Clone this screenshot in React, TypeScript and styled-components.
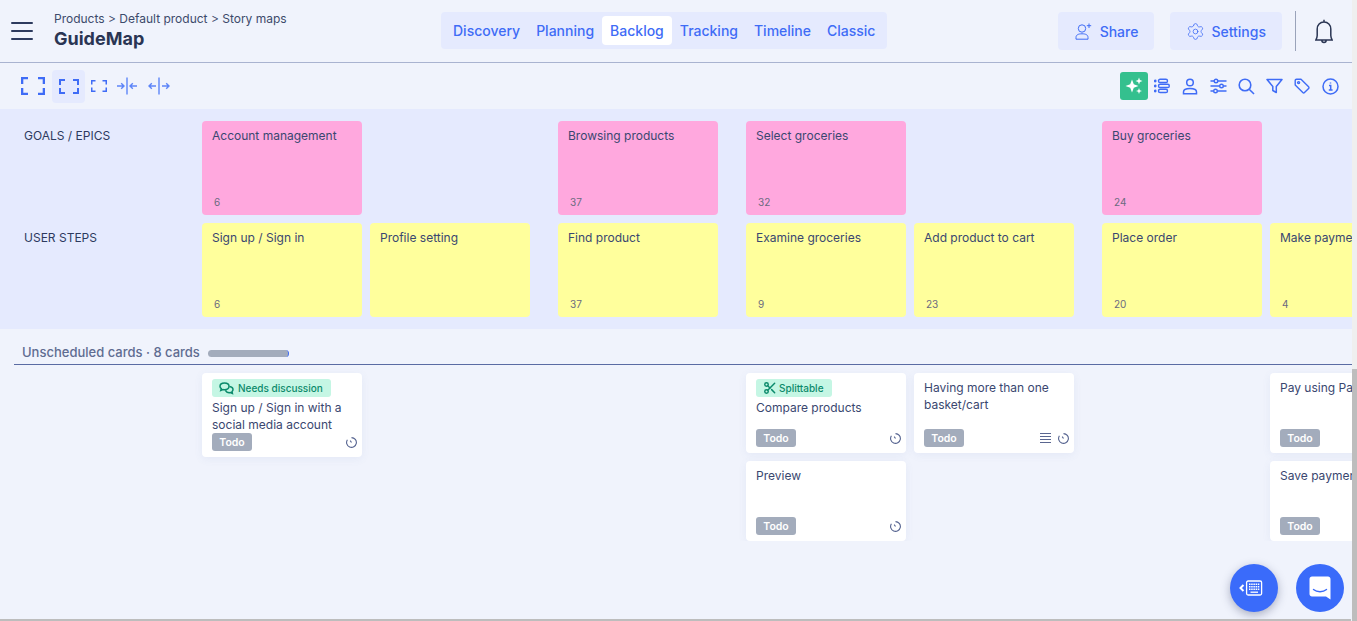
import React from 'react'
import styled, { createGlobalStyle } from 'styled-components'
import { Scissors, Settings } from 'lucide-react'

// ================================================================================================

const GlobalStyle = createGlobalStyle`
  html, body {
    margin: 0;
    padding: 0;
    height: 621px;
    overflow: hidden;
    background: #f0f3fc;
    font-family: Inter, "Liberation Sans", sans-serif;
  }
`

const BLUE = '#3f6cf6'
const INK = '#3a4770'

// ================================================================================================

const Page = styled.div`
  position: relative;
  width: 1357px;
  height: 621px;
  overflow: hidden;
  background: #f0f3fc;
`

const Header = styled.header`
  display: flex;
  align-items: center;
  height: 63px;
  padding: 0 24px 0 11px;
  box-sizing: border-box;
  border-bottom: 1px solid #a9b3d0;
`

const Brand = styled.div`
  display: flex;
  align-items: center;
  gap: 21px;
  width: 430px;
`

const BrandText = styled.div`
  padding-bottom: 2px;
`

const Burger = styled.button`
  display: flex;
  flex-direction: column;
  gap: 6px;
  width: 22px;
  padding: 0;
  border: none;
  background: transparent;

  span {
    height: 2px;
    border-radius: 1px;
    background: #2d3a5e;
  }
`

const Crumbs = styled.div`
  font-size: 12px;
  line-height: 16px;
  color: #3d4a6b;
`

const Title = styled.div`
  font-size: 18px;
  line-height: 23px;
  font-weight: 700;
  color: #2a3553;
`

const Tabs = styled.nav`
  display: flex;
  align-items: center;
  height: 37px;
  margin-top: -1px;
  padding: 0 4px;
  border-radius: 4px;
  background: #e5eafe;
`

const Tab = styled.a<{ $active?: boolean }>`
  padding: 0 8px;
  height: 29px;
  line-height: 29px;
  border-radius: 4px;
  font-size: 14px;
  font-weight: 500;
  color: ${BLUE};
  background: ${props => (props.$active ? '#fff' : 'transparent')};
`

const HeaderActions = styled.div`
  display: flex;
  align-items: center;
  margin-left: auto;
`

const ActionBtn = styled.button`
  display: flex;
  align-items: center;
  gap: 8px;
  height: 38px;
  padding: 0 16px 0 17px;
  margin-left: 16px;
  border: none;
  border-radius: 4px;
  font-family: inherit;
  font-size: 14px;
  font-weight: 500;
  color: ${BLUE};
  background: #e5eafe;
`

const Gear = styled(Settings)`
  margin: 0 -1.5px;
`

const Divider = styled.div`
  width: 1px;
  height: 40px;
  margin: 0 19px 0 13px;
  background: #9aa3ba;
`

const Toolbar = styled.div`
  display: flex;
  align-items: center;
  height: 46px;
  padding: 0 13px 0 15px;
  box-sizing: border-box;
`

const ToolBtn = styled.button<{ $active?: boolean; $size?: number; $gap?: number }>`
  display: flex;
  align-items: center;
  justify-content: center;
  width: ${props => props.$size || 28}px;
  height: 33px;
  margin-left: ${props => props.$gap || 0}px;
  padding: 0;
  border: none;
  border-radius: 4px;
  background: ${props => (props.$active ? '#e5eafe' : 'transparent')};
  color: ${BLUE};
`

const ToolRight = styled.div`
  display: flex;
  align-items: center;
  margin-left: auto;
`

const AiBtn = styled.button`
  display: flex;
  align-items: center;
  justify-content: center;
  width: 28px;
  height: 28px;
  padding: 0;
  border: none;
  border-radius: 3px;
  background: #34c08e;
`

const Band = styled.section`
  display: flex;
  flex-direction: column;
  gap: 8px;
  width: 1352px;
  height: 220px;
  padding: 12px 0;
  box-sizing: border-box;
  overflow: hidden;
  background: #e5eafe;
`

const Lane = styled.div`
  display: flex;
  height: 94px;
`

const LaneLabel = styled.div`
  flex: 0 0 202px;
  padding: 7px 0 0 24px;
  box-sizing: border-box;
  font-size: 12px;
  line-height: 16px;
  color: #2d3a5e;
`

const Columns = styled.div`
  display: flex;
  flex: none;
  gap: 28px;
`

const Group = styled.div`
  display: flex;
  flex: none;
  gap: 8px;
`

const Slot = styled.div`
  flex: none;
  width: 160px;
`

const Sticky = styled.div<{ $color: string }>`
  position: relative;
  flex: none;
  width: 160px;
  height: 94px;
  padding: 7px 10px;
  box-sizing: border-box;
  border-radius: 4px;
  font-size: 12px;
  line-height: 16px;
  white-space: nowrap;
  color: ${INK};
  background: ${props => props.$color};
`

const Count = styled.span`
  position: absolute;
  left: 12px;
  bottom: 6px;
  font-size: 10px;
  line-height: 14px;
  color: #6b6b80;
`

const Section = styled.div`
  display: flex;
  align-items: center;
  width: 1338px;
  height: 36px;
  margin-left: 14px;
  padding: 11px 0 0 8px;
  box-sizing: border-box;
  border-bottom: 1px solid #5a6ba3;
  font-size: 13px;
  font-weight: 500;
  color: #5f6c91;
`

const Progress = styled.div`
  width: 81px;
  height: 7px;
  margin-left: 8px;
  margin-top: 3px;
  border-radius: 4px;
  border-right: 1px solid ${BLUE};
  box-sizing: border-box;
  background: #a3acbc;
`

const Backlog = styled.div`
  display: flex;
  gap: 28px;
  width: 1352px;
  padding: 8px 0 0 202px;
  box-sizing: border-box;
  overflow: hidden;
`

const Stack = styled.div`
  display: flex;
  flex: none;
  flex-direction: column;
  gap: 8px;
  width: 160px;
`

const Card = styled.article<{ $tall?: boolean }>`
  display: flex;
  flex-direction: column;
  width: 160px;
  min-height: ${props => (props.$tall ? 84 : 80)}px;
  padding: 6px 5px 6px 10px;
  box-sizing: border-box;
  border-radius: 4px;
  background: #fff;
  box-shadow: 0 2px 8px rgba(90, 110, 180, 0.08);
`

const CardText = styled.div`
  font-size: 12px;
  line-height: 17px;
  white-space: pre;
  color: ${INK};
`

const Tag = styled.span`
  display: inline-flex;
  align-self: flex-start;
  align-items: center;
  gap: 4px;
  height: 18px;
  margin-bottom: 2px;
  padding: 0 8px 0 7px;
  border-radius: 3px;
  font-size: 10px;
  font-weight: 500;
  color: #0b8a6b;
  background: #c5f6e4;
`

const TagScissors = styled(Scissors)`
  margin-right: -2px;
`

const CardFooter = styled.div`
  display: flex;
  align-items: center;
  gap: 7px;
  margin-top: auto;
`

const Status = styled.span`
  width: 40px;
  height: 18px;
  margin-right: auto;
  border-radius: 3px;
  font-size: 10.5px;
  font-weight: 600;
  line-height: 19px;
  text-align: center;
  color: #fff;
  background: #a3acbc;
`

const Fab = styled.button<{ $right: number; $shadow?: boolean }>`
  position: absolute;
  right: ${props => props.$right}px;
  bottom: 9px;
  display: flex;
  align-items: center;
  justify-content: center;
  width: 48px;
  height: 48px;
  padding: 0;
  border: none;
  border-radius: 50%;
  background: #3a6bfa;
  box-shadow: ${props => (props.$shadow ? '0 3px 10px rgba(40, 50, 90, 0.35)' : 'none')};
`

const VTrack = styled.div`
  position: absolute;
  top: 0;
  right: 0;
  bottom: 0;
  width: 5px;
  background: #efefef;
`

const VThumb = styled.div`
  position: absolute;
  top: 369px;
  right: 0;
  bottom: 0;
  width: 5px;
  background: #bdbdbd;
`

const HThumb = styled.div`
  position: absolute;
  left: 0;
  bottom: 0;
  width: 1351px;
  height: 2px;
  background: #bdbdbd;
`

// ================================================================================================

const Frame = ({ w, h, t, len }: { w: number; h: number; t: number; len: number }) => {
  const a = t / 2
  return (
    <svg width={w} height={h} viewBox={`0 0 ${w} ${h}`} fill="none" stroke="currentColor" strokeWidth={t}>
      <path
        d={`M${a} ${len}V${a}H${len}M${w - len} ${a}H${w - a}V${len}M${w - a} ${h - len}V${h - a}H${w - len}M${len} ${h - a}H${a}V${h - len}`}
      />
    </svg>
  )
}

const Collapse = () => (
  <svg width="22" height="18" viewBox="0 0 22 18" fill="none" stroke="#5d85f8" strokeWidth="1.4">
    <path d="M11 .5V17.5M1 9H8M5.2 6.2L8 9L5.2 11.8M21 9H14M16.8 6.2L14 9L16.8 11.8" />
  </svg>
)

const Expand = () => (
  <svg width="22" height="18" viewBox="0 0 22 18" fill="none" stroke="#5d85f8" strokeWidth="1.4">
    <path d="M11 .5V17.5M8 9H1M3.8 6.2L1 9L3.8 11.8M14 9H21M18.2 6.2L21 9L18.2 11.8" />
  </svg>
)

const ShareIcon = () => (
  <svg width="17" height="17" viewBox="0 0 17 17" fill="none" stroke="currentColor" strokeWidth="1">
    <circle cx="7" cy="5.5" r="3.7" />
    <path d="M1 16.2V14.5C1 12 3 10.8 7 10.8C11 10.8 13 12 13 14.5V16.2ZM14 .5V5M11.8 2.7H16.2" />
  </svg>
)

const Bell = () => (
  <svg width="18" height="25" viewBox="0 0 18 25" fill="none" stroke="#2a3553" strokeWidth="1.5">
    <path d="M9 .8V3M9 3C5 3 2.2 6 2.2 10V16.5C2.2 18.3 1.6 19.5.8 21H17.2C16.4 19.5 15.8 18.3 15.8 16.5V10C15.8 6 13 3 9 3ZM6.8 21C6.8 24.4 11.2 24.4 11.2 21" />
  </svg>
)

const Sparkles = () => (
  <svg width="20" height="20" viewBox="0 0 20 20" fill="#fff">
    <path d="M8 3.5L9.8 8.2L14.5 10L9.8 11.8L8 16.5L6.2 11.8L1.5 10L6.2 8.2Z" />
    <path d="M15 1.5L15.9 4.1L18.5 5L15.9 5.9L15 8.5L14.1 5.9L11.5 5L14.1 4.1Z" />
    <path d="M15 12L15.8 14.2L18 15L15.8 15.8L15 18L14.2 15.8L12 15L14.2 14.2Z" />
  </svg>
)

const BarList = () => (
  <svg width="16" height="16" viewBox="0 0 16 16" fill="none" stroke="currentColor" strokeWidth="1.4">
    <circle cx="1.2" cy="3" r=".7" />
    <circle cx="1.2" cy="8" r=".7" />
    <circle cx="1.2" cy="13" r=".7" />
    <rect x="4.5" y="1.3" width="9" height="3.2" rx="1.6" />
    <rect x="4.5" y="6.3" width="10.8" height="3.2" rx="1.6" />
    <rect x="4.5" y="11.3" width="9" height="3.2" rx="1.6" />
  </svg>
)

const Person = () => (
  <svg width="16" height="17" viewBox="0 0 16 17" fill="none" stroke="currentColor" strokeWidth="1.5">
    <circle cx="8" cy="4.5" r="3.3" />
    <path d="M1.5 15.7V14C1.5 11.8 3.5 10.6 8 10.6C12.5 10.6 14.5 11.8 14.5 14V15.7Z" />
  </svg>
)

const Sliders = () => (
  <svg width="17" height="16" viewBox="0 0 17 16" fill="none" stroke="currentColor" strokeWidth="1.4">
    <path d="M.5 3H4M8 3H16.5M.5 8H9.5M13.5 8H16.5M.5 13H3.5M7.5 13H16.5" />
    <circle cx="6" cy="3" r="1.8" />
    <circle cx="11.5" cy="8" r="1.8" />
    <circle cx="5.5" cy="13" r="1.8" />
  </svg>
)

const Search = () => (
  <svg width="17" height="17" viewBox="0 0 17 17" fill="none" stroke="currentColor" strokeWidth="1.6">
    <circle cx="7" cy="7" r="5.8" />
    <path d="M11.2 11.2L16 16" />
  </svg>
)

const Funnel = () => (
  <svg width="17" height="16" viewBox="0 0 17 16" fill="none" stroke="currentColor" strokeWidth="1.5">
    <path d="M1 1.5H16L10.3 8.5V14.5L6.8 12.5V8.5Z" strokeLinejoin="round" />
  </svg>
)

const TagIcon = () => (
  <svg width="16" height="16" viewBox="0 0 16 16" fill="none" stroke="currentColor" strokeWidth="1.4">
    <path d="M1.2 2.5C1.2 1.7 1.8 1.2 2.5 1.2H7L14.6 8.8C15.1 9.3 15.1 10 14.6 10.5L10.5 14.6C10 15.1 9.3 15.1 8.8 14.6L1.2 7Z" strokeLinejoin="round" />
    <circle cx="4.6" cy="4.6" r="1" />
  </svg>
)

const InfoIcon = () => (
  <svg width="17" height="17" viewBox="0 0 17 17" fill="none" stroke="currentColor" strokeWidth="1.5">
    <circle cx="8.5" cy="8.5" r="7.5" />
    <path d="M7 7.5H8.7V12M6.8 12H10.6M8.5 4.6V5.6" />
  </svg>
)

const TimerIcon = () => (
  <svg width="11" height="11" viewBox="0 0 11 11" fill="none" stroke="#54628f" strokeWidth="1.1">
    <path d="M5.5.6A4.9 4.9 0 1 1 1.4 2.8M5.5 5.5L4.2 3.6" />
  </svg>
)

const LinesIcon = () => (
  <svg width="11" height="10" viewBox="0 0 11 10" fill="none" stroke="#5a6690">
    <path d="M0 .5H11M0 3.5H11M0 6.5H11M0 9.5H11" />
  </svg>
)

const ChatsIcon = () => (
  <svg width="15" height="13" viewBox="0 0 15 13" fill="none" stroke="#0b8a6b" strokeWidth="1.5">
    <path d="M5.5 1C2.9 1 1 2.4 1 4.3C1 5.3 1.5 6.1 2.3 6.7L1.8 8.4L3.9 7.5C4.4 7.6 5 7.7 5.5 7.7C8.1 7.7 10 6.2 10 4.3C10 2.4 8.1 1 5.5 1Z" />
    <path d="M10.5 4.5C12.6 4.7 14 5.9 14 7.5C14 8.3 13.6 9 13 9.5L13.4 11.4L11.5 10.6C9.4 11 7.3 10.2 6.4 8.2" />
  </svg>
)

const KeyboardIcon = () => (
  <svg width="30" height="16" viewBox="0 0 30 16" fill="none" stroke="#fff">
    <path d="M4.5 5L1.5 8L4.5 11" strokeWidth="2" />
    <rect x="7.6" y="1" width="15" height="14" rx="1.5" strokeWidth="1.3" />
    <path d="M10 4.3H20.5M10 6.8H20.5M10 9.3H20.5" strokeWidth="1.5" strokeDasharray="1.5 .7" />
    <path d="M11.5 12.2H19" strokeWidth="1.3" />
  </svg>
)

const ChatIcon = () => (
  <svg width="22" height="24" viewBox="0 0 22 24" fill="#fff">
    <path d="M3 .5H19C20.4.5 21.5 1.6 21.5 3V23.5L17 20.5H3C1.6 20.5.5 19.4.5 18V3C.5 1.6 1.6.5 3 .5Z" />
    <path d="M4.5 13.5C8 16.5 14 16.5 17.5 13.5" fill="none" stroke="#3a6bfa" strokeWidth="1.4" strokeLinecap="round" />
  </svg>
)

// ================================================================================================

const tabs = ['Discovery', 'Planning', 'Backlog', 'Tracking', 'Timeline', 'Classic']

type Step = { title: string; count?: number }

const epics: (Step | null)[][] = [
  [{ title: 'Account management', count: 6 }, null],
  [{ title: 'Browsing products', count: 37 }],
  [{ title: 'Select groceries', count: 32 }, null],
  [{ title: 'Buy groceries', count: 24 }, null],
]

const steps: Step[][] = [
  [{ title: 'Sign up / Sign in', count: 6 }, { title: 'Profile setting' }],
  [{ title: 'Find product', count: 37 }],
  [{ title: 'Examine groceries', count: 9 }, { title: 'Add product to cart', count: 23 }],
  [{ title: 'Place order', count: 20 }, { title: 'Make payment', count: 4 }],
]

const renderLane = (groups: (Step | null)[][], color: string) => (
  <Columns>
    {groups.map((group, i) => (
      <Group key={i}>
        {group.map((step, j) =>
          step ? (
            <Sticky key={j} $color={color}>
              {step.title}
              {step.count !== undefined && <Count>{step.count}</Count>}
            </Sticky>
          ) : (
            <Slot key={j} />
          ),
        )}
      </Group>
    ))}
  </Columns>
)

const App = () => (
  <Page>
    <GlobalStyle />

    <Header>
      <Brand>
        <Burger>
          <span />
          <span />
          <span />
        </Burger>
        <BrandText>
          <Crumbs>Products &gt; Default product &gt; Story maps</Crumbs>
          <Title>GuideMap</Title>
        </BrandText>
      </Brand>

      <Tabs>
        {tabs.map(tab => (
          <Tab key={tab} $active={tab === 'Backlog'}>
            {tab}
          </Tab>
        ))}
      </Tabs>

      <HeaderActions>
        <ActionBtn>
          <ShareIcon />
          Share
        </ActionBtn>
        <ActionBtn>
          <Gear size={19} strokeWidth={1} />
          Settings
        </ActionBtn>
        <Divider />
        <Bell />
      </HeaderActions>
    </Header>

    <Toolbar>
      <ToolBtn $size={36}>
        <Frame w={24} h={18} t={2.3} len={7} />
      </ToolBtn>
      <ToolBtn $size={33} $gap={1} $active>
        <Frame w={20} h={15} t={2} len={6} />
      </ToolBtn>
      <ToolBtn $size={28}>
        <Frame w={16} h={12} t={1.5} len={4.5} />
      </ToolBtn>
      <ToolBtn $size={28}>
        <Collapse />
      </ToolBtn>
      <ToolBtn $size={36}>
        <Expand />
      </ToolBtn>

      <ToolRight>
        <AiBtn>
          <Sparkles />
        </AiBtn>
        <ToolBtn>
          <BarList />
        </ToolBtn>
        <ToolBtn>
          <Person />
        </ToolBtn>
        <ToolBtn>
          <Sliders />
        </ToolBtn>
        <ToolBtn>
          <Search />
        </ToolBtn>
        <ToolBtn>
          <Funnel />
        </ToolBtn>
        <ToolBtn>
          <TagIcon />
        </ToolBtn>
        <ToolBtn>
          <InfoIcon />
        </ToolBtn>
      </ToolRight>
    </Toolbar>

    <Band>
      <Lane>
        <LaneLabel>GOALS / EPICS</LaneLabel>
        {renderLane(epics, '#ffa8de')}
      </Lane>
      <Lane>
        <LaneLabel>USER STEPS</LaneLabel>
        {renderLane(steps, '#ffff9c')}
      </Lane>
    </Band>

    <Section>
      Unscheduled cards · 8 cards
      <Progress />
    </Section>

    <Backlog>
      <Group>
        <Stack>
          <Card $tall>
            <Tag>
              <ChatsIcon />
              Needs discussion
            </Tag>
            <CardText>{'Sign up / Sign in with a\nsocial media account'}</CardText>
            <CardFooter>
              <Status>Todo</Status>
              <TimerIcon />
            </CardFooter>
          </Card>
        </Stack>
        <Slot />
      </Group>
      <Slot />
      <Group>
        <Stack>
          <Card>
            <Tag>
              <TagScissors size={14} color="#0b8a6b" strokeWidth={2.5} />
              Splittable
            </Tag>
            <CardText>Compare products</CardText>
            <CardFooter>
              <Status>Todo</Status>
              <TimerIcon />
            </CardFooter>
          </Card>
          <Card>
            <CardText>Preview</CardText>
            <CardFooter>
              <Status>Todo</Status>
              <TimerIcon />
            </CardFooter>
          </Card>
        </Stack>
        <Stack>
          <Card>
            <CardText>{'Having more than one\nbasket/cart'}</CardText>
            <CardFooter>
              <Status>Todo</Status>
              <LinesIcon />
              <TimerIcon />
            </CardFooter>
          </Card>
        </Stack>
      </Group>
      <Group>
        <Slot />
        <Stack>
          <Card>
            <CardText>Pay using PayPal</CardText>
            <CardFooter>
              <Status>Todo</Status>
            </CardFooter>
          </Card>
          <Card>
            <CardText>Save payment method</CardText>
            <CardFooter>
              <Status>Todo</Status>
            </CardFooter>
          </Card>
        </Stack>
      </Group>
    </Backlog>

    <Fab $right={79} $shadow>
      <KeyboardIcon />
    </Fab>
    <Fab $right={13}>
      <ChatIcon />
    </Fab>

    <VTrack />
    <VThumb />
    <HThumb />
  </Page>
)

// ================================================================================================

export default App
